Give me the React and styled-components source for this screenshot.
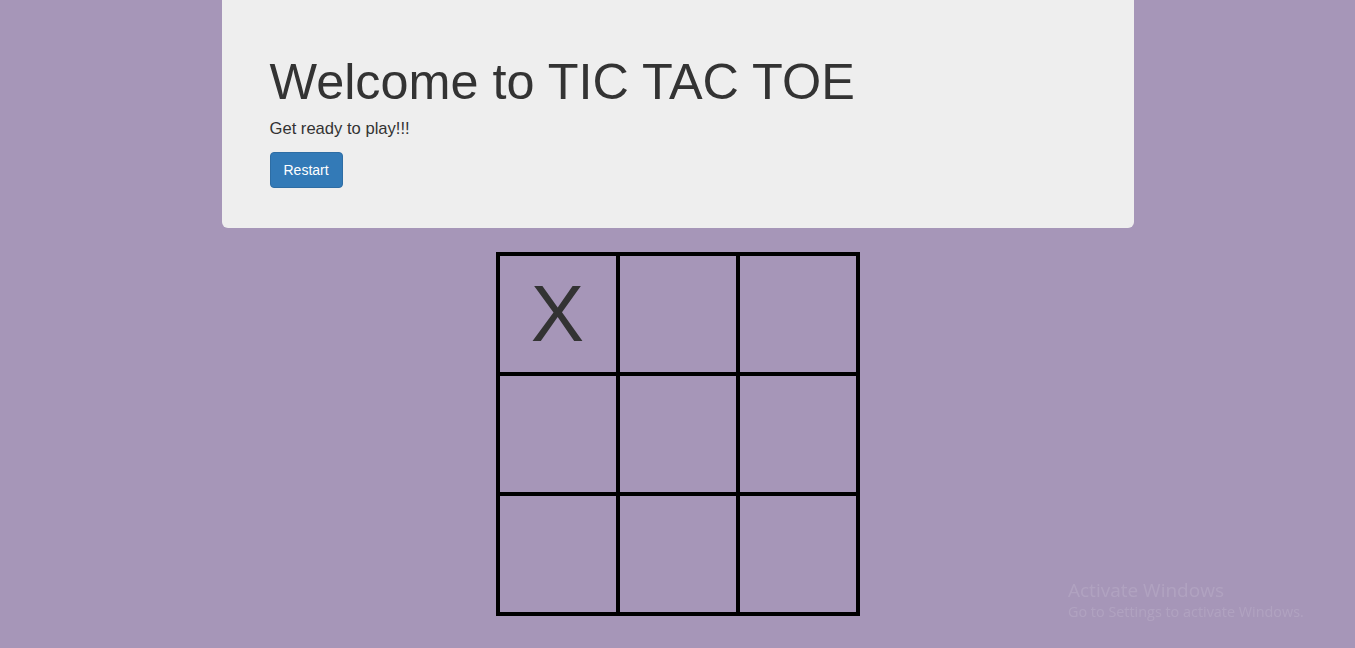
import React from 'react';
import styled, { createGlobalStyle } from 'styled-components';

const GlobalStyle = createGlobalStyle`
  html, body {
    margin: 0;
    padding: 0;
    background: #a696b8;
  }
  body {
    font-family: "Liberation Sans", Arial, sans-serif;
    color: #333;
  }
`;

const board = ['X', '', '', '', '', '', '', '', ''];

const App = () => {
  return (
    <>
      <GlobalStyle />
      <Page>
        <Jumbotron>
          <Title>Welcome to TIC TAC TOE</Title>
          <Lead>Get ready to play!!!</Lead>
          <Button type="button">Restart</Button>
        </Jumbotron>
        <Board>
          {board.map((mark, i) => (
            <Cell key={i}>{mark}</Cell>
          ))}
        </Board>
      </Page>
      <Watermark>
        <WatermarkTitle>Activate Windows</WatermarkTitle>
        <WatermarkText>Go to Settings to activate Windows.</WatermarkText>
      </Watermark>
    </>
  );
};

export default App;

const Page = styled.div`
  display: flex;
  flex-direction: column;
  align-items: center;
  gap: 24px;
  min-height: 648px;
  box-sizing: border-box;
`;

const Jumbotron = styled.div`
  width: 912px;
  box-sizing: border-box;
  padding: 54px 48px 40px;
  background: #eeeeee;
  border-radius: 0 0 6px 6px;
  display: flex;
  flex-direction: column;
  align-items: flex-start;
`;

const Title = styled.h1`
  margin: 0;
  font-size: 50.4px;
  font-weight: 400;
  line-height: 55px;
  color: #333;
`;

const Lead = styled.p`
  margin: 8px 0 12px;
  font-size: 16.6px;
  line-height: 23px;
  color: #333;
`;

const Button = styled.button`
  height: 36px;
  padding: 0 13px;
  font-family: "Liberation Sans", Arial, sans-serif;
  font-size: 14px;
  color: #fff;
  background: #337ab7;
  border: 1px solid #2e6da4;
  border-radius: 4px;
  cursor: pointer;
`;

const Board = styled.div`
  display: grid;
  grid-template-columns: repeat(3, 120px);
  grid-template-rows: repeat(3, 120px);
  border: 2px solid #000;
`;

const Cell = styled.div`
  box-sizing: border-box;
  border: 2px solid #000;
  display: flex;
  align-items: center;
  justify-content: center;
  font-size: 80px;
  line-height: 1;
  color: #333;
`;

const Watermark = styled.div`
  position: fixed;
  left: 1068px;
  top: 578px;
  font-family: "Open Sans", "Noto Sans", sans-serif;
  color: rgba(255, 255, 255, 0.12);
  pointer-events: none;
`;

const WatermarkTitle = styled.div`
  font-size: 19px;
  line-height: 24px;
`;

const WatermarkText = styled.div`
  font-size: 14.4px;
  line-height: 20px;
`;
